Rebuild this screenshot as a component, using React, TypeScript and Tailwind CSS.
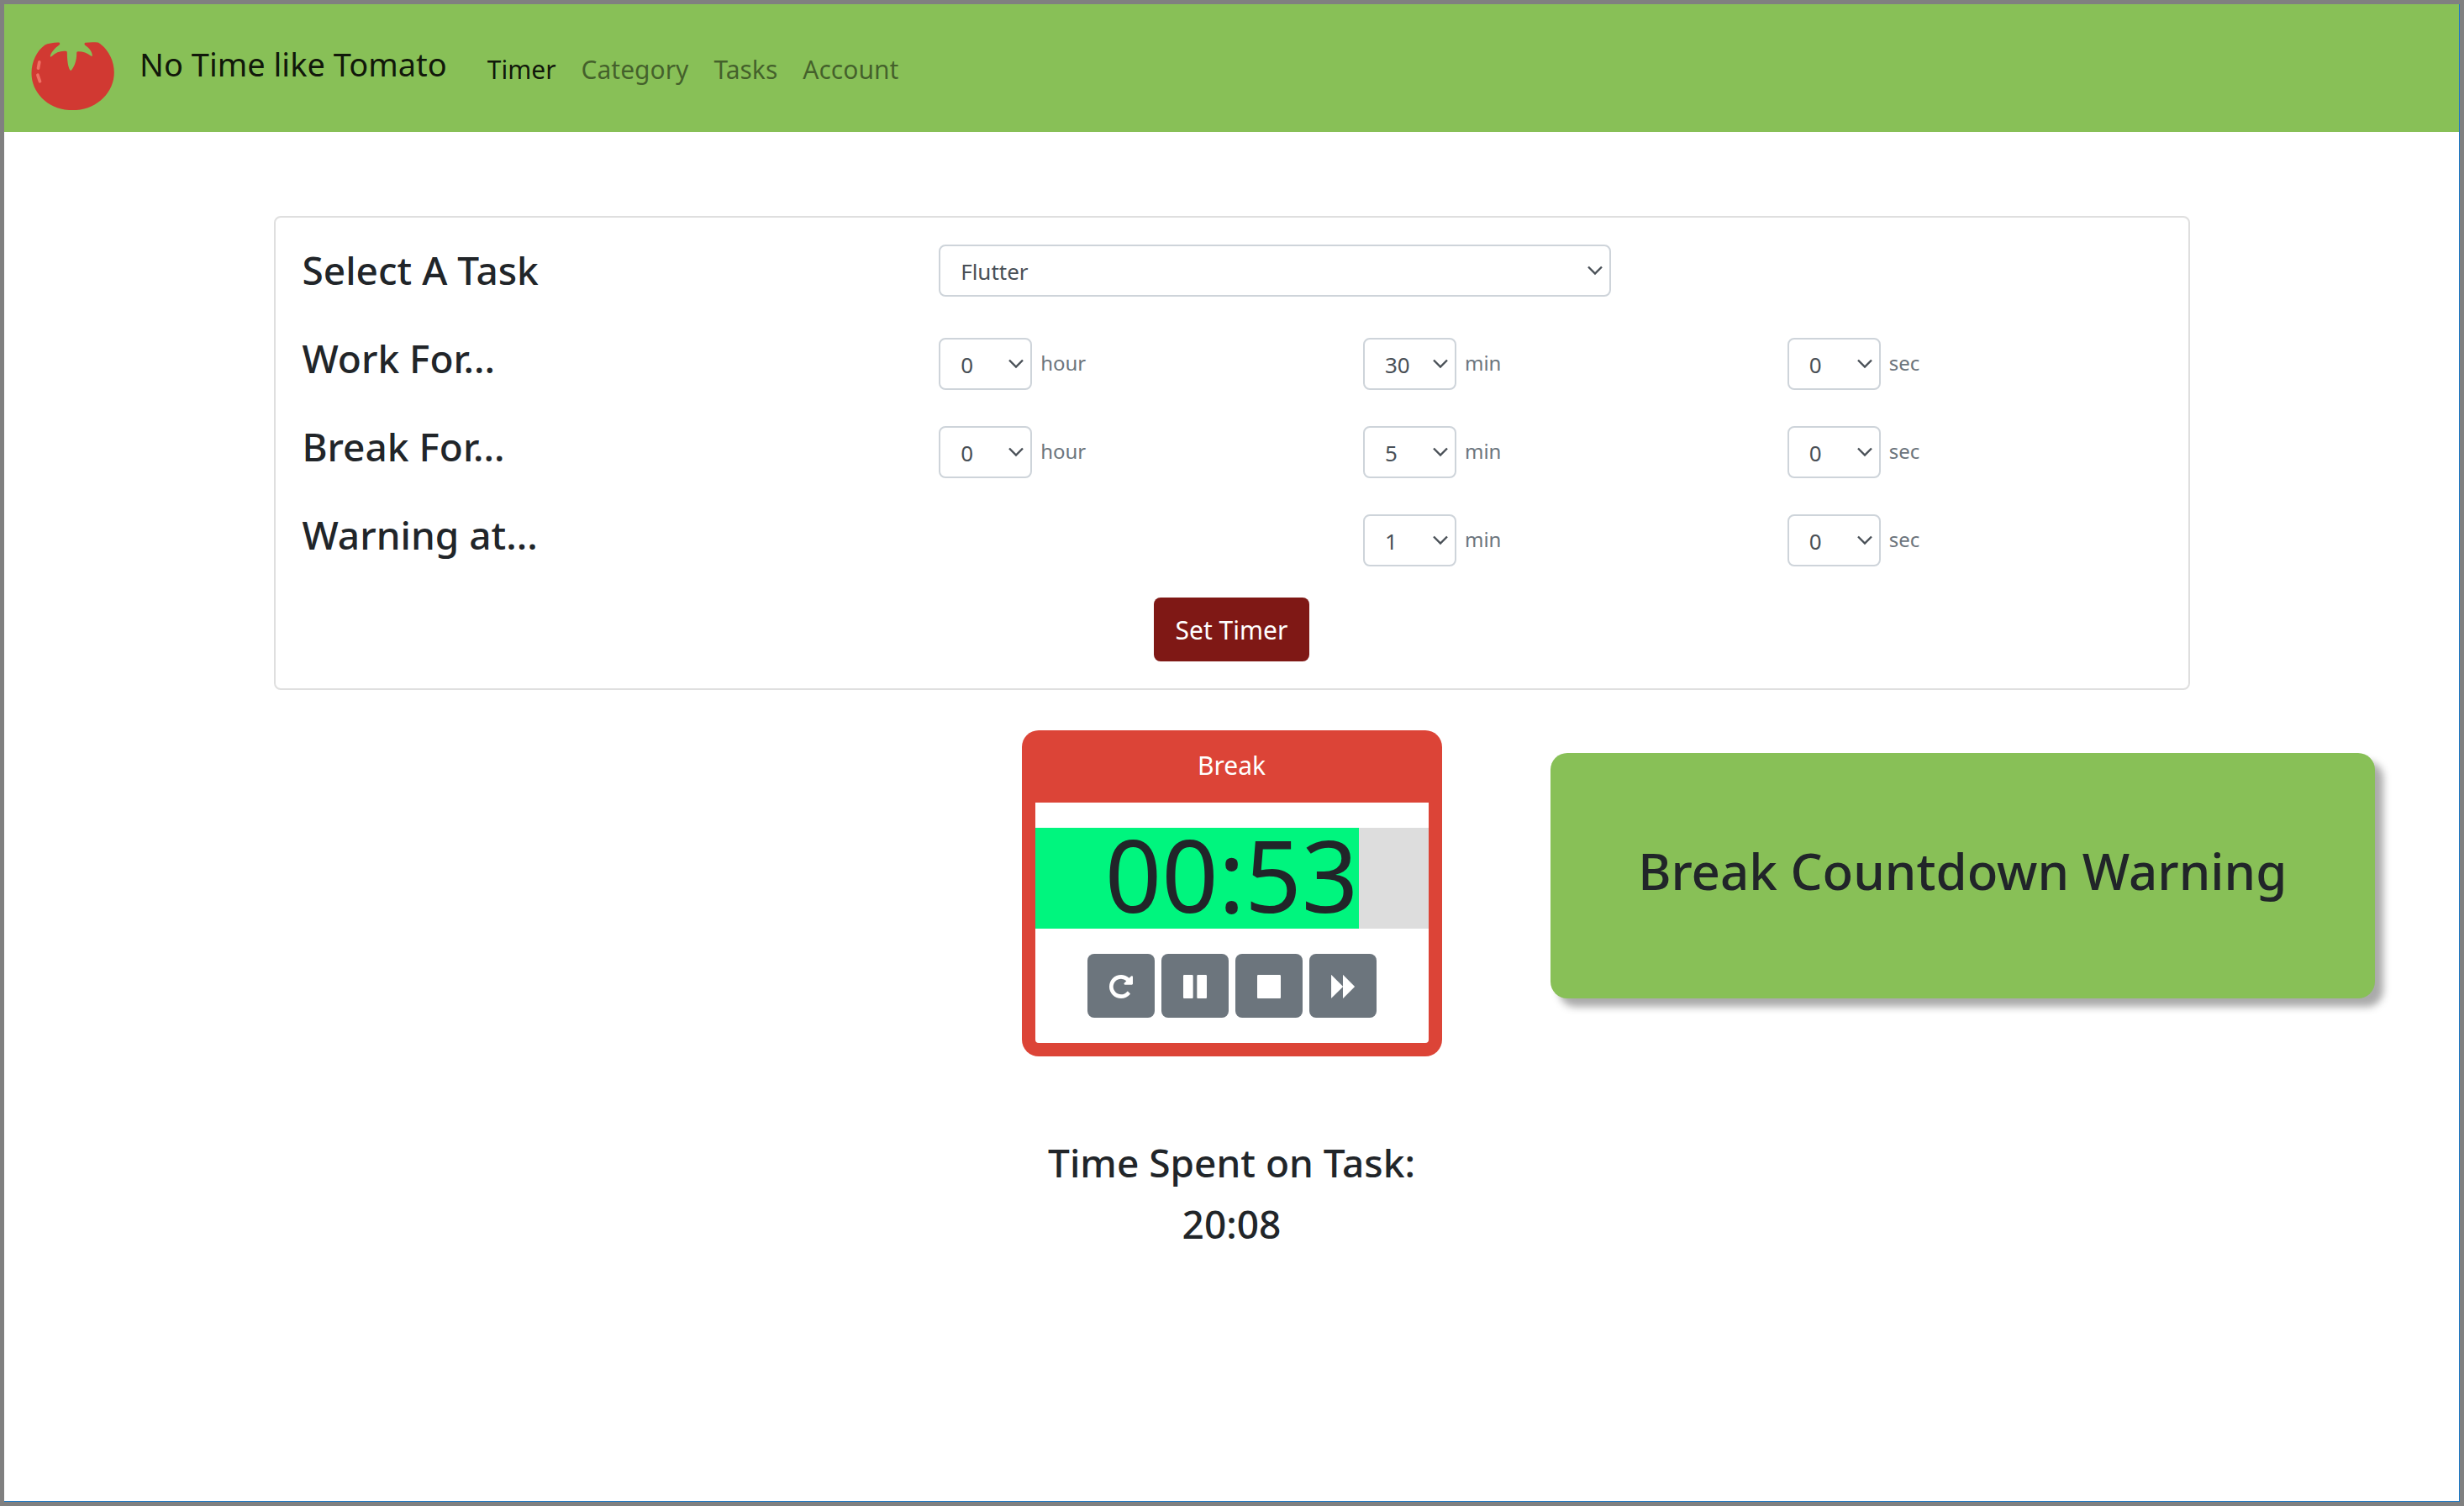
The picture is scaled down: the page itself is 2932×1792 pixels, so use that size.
import type { ReactNode } from "react";

const navLinks = ["Timer", "Category", "Tasks", "Account"];

function TomatoLogo() {
  return (
    <svg viewBox="52.5 4.5 297 297" className="size-[99px] shrink-0" aria-hidden="true">
      <path
        fill="#d13932"
        d="M150 60C156 60 157 66 152 70C140 78 124 95 121 108C121 113 124 112 127 109C140 96 158 89 176 91C180 91 181 93 181 97C181 120 184 148 191 158Q194 162 197 158C208 145 216 120 215 97Q215 92 220 92C238 92 253 97 266 108Q271 111 271 106C269 90 259 79 245 70C241 66 243 61 248 61C262 59 275 59 290 60C294 61 298 64 304 69C330 90 349 127 349 167C349 240 285 302 201 302C115 302 54 240 54 170C54 130 72 90 102 69C112 64 130 61 150 60Z"
      />
      <path d="M82 130L78 152M76 176L84 199" stroke="#ef7064" strokeWidth="11" strokeLinecap="round" fill="none" />
    </svg>
  );
}

function SelectBox({ id, value, options }: { id: string; value: string; options: string[] }) {
  return (
    <span className="relative block w-full">
      <select
        id={id}
        defaultValue={value}
        className="block h-[62px] w-full appearance-none rounded-lg border-2 border-[#ced4da] bg-white pt-0.5 pl-6 text-[26px] text-[#495057]"
      >
        {options.map((o) => (
          <option key={o}>{o}</option>
        ))}
      </select>
      <svg
        viewBox="0 0 18 12"
        className="pointer-events-none absolute top-[25px] right-2.5 h-3 w-[18px]"
        fill="none"
        stroke="#495057"
        strokeWidth="2.4"
        aria-hidden="true"
      >
        <path d="M1 1.5L9 9.5L17 1.5" />
      </svg>
    </span>
  );
}

function UnitField({ name, unit, value }: { name: string; unit: string; value: string }) {
  const id = `${name}-${unit}`;
  const options = Array.from({ length: unit === "hour" ? 24 : 60 }, (_, i) => String(i));
  return (
    <div className="flex items-center gap-2.5 pt-1.5">
      <div className="w-[111px]">
        <SelectBox id={id} value={value} options={options} />
      </div>
      <label htmlFor={id} className="pb-0.5 text-2xl leading-9 text-[#6c757d]">
        {unit}
      </label>
    </div>
  );
}

function Row({ title, children }: { title: ReactNode; children: ReactNode }) {
  return (
    <div className="grid min-h-[68px] grid-cols-[698fr_445fr_445fr_445fr] items-start gap-x-[60px]">
      <h2 className="text-[46px] leading-[60px] font-medium">{title}</h2>
      {children}
    </div>
  );
}

const controls = [
  {
    name: "Restart",
    path: "M1664 256v448q0 26-19 45t-45 19h-448q-42 0-59-40-17-39 14-69l138-138q-148-137-349-137-104 0-198.5 40.5t-163.5 109.5-109.5 163.5-40.5 198.5 40.5 198.5 109.5 163.5 163.5 109.5 198.5 40.5q119 0 225-52t179-147q7-10 23-12 15 0 25 9l137 138q9 8 9.5 20.5t-7.5 22.5q-109 132-264 204.5t-327 72.5q-156 0-298-61t-245-164-164-245-61-298 61-298 164-245 245-164 298-61q147 0 284.5 55.5t244.5 156.5l130-129q29-31 70-14 39 17 39 59z",
  },
  {
    name: "Pause",
    path: "M1664 192v1408q0 26-19 45t-45 19h-512q-26 0-45-19t-19-45v-1408q0-26 19-45t45-19h512q26 0 45 19t19 45zm-896 0v1408q0 26-19 45t-45 19h-512q-26 0-45-19t-19-45v-1408q0-26 19-45t45-19h512q26 0 45 19t19 45z",
  },
  {
    name: "Stop",
    path: "M1664 192v1408q0 26-19 45t-45 19h-1408q-26 0-45-19t-19-45v-1408q0-26 19-45t45-19h1408q26 0 45 19t19 45z",
  },
  {
    name: "Skip",
    path: "M141 1651q-10 10-10 0v-1518q0-10 10 0l741 741q9 9 13 19v-760q0-10 10 0l740 740q19 19 19 23t-19 23l-740 740q-10 10-10 0v-760q-4 10-13 19z",
  },
];

function TimerCard() {
  return (
    <section className="w-[500px] rounded-[20px] bg-[#dc4437] px-4 pb-4">
      <h2 className="flex h-[86px] items-center justify-center pb-0.5 text-3xl text-white">Break</h2>
      <div className="rounded-b bg-white py-[30px]">
        <div className="h-[120px] bg-[linear-gradient(to_right,#00f57e_82.3%,#dddddd_82.3%)] text-center text-[118px] leading-[112px]">
          00:53
        </div>
        <div className="mt-[30px] flex justify-center gap-2">
          {controls.map((c) => (
            <button
              key={c.name}
              type="button"
              aria-label={c.name}
              className="flex h-[76px] w-20 items-center justify-center rounded-lg bg-[#6c757d] pt-0.5"
            >
              <svg viewBox="128 128 1536 1536" className="size-7" fill="#ffffff" aria-hidden="true">
                <path d={c.path} />
              </svg>
            </button>
          ))}
        </div>
      </div>
    </section>
  );
}

export default function App() {
  return (
    <div className="flex min-h-screen flex-col border-[5px] border-[#808080] font-['Noto_Sans',sans-serif] text-[#212529]">
      <div className="flex-1 border-r border-b border-[#1979ca] bg-white">
        <nav className="flex h-[152px] items-center bg-[#88c057] px-8">
          <TomatoLogo />
          <a href="#" className="ml-[30px] pb-2.5 text-[38px] text-black/90">
            No Time like Tomato
          </a>
          <div className="ml-12 flex gap-[30px] pt-1 text-3xl">
            {navLinks.map((l, i) => (
              <a key={l} href="#" className={i === 0 ? "text-black/90" : "text-black/50"}>
                {l}
              </a>
            ))}
          </div>
        </nav>

        <main>
          <form className="mx-auto mt-[100px] flex w-full max-w-[2280px] flex-col gap-[37px] rounded-lg border-2 border-[#dfdfdf] p-8">
            <Row title={<label htmlFor="task">Select A Task</label>}>
              <div className="col-span-3 w-[55%]">
                <SelectBox id="task" value="Flutter" options={["Flutter"]} />
              </div>
            </Row>
            <Row title="Work For...">
              <UnitField name="work" unit="hour" value="0" />
              <UnitField name="work" unit="min" value="30" />
              <UnitField name="work" unit="sec" value="0" />
            </Row>
            <Row title="Break For...">
              <UnitField name="break" unit="hour" value="0" />
              <UnitField name="break" unit="min" value="5" />
              <UnitField name="break" unit="sec" value="0" />
            </Row>
            <Row title="Warning at...">
              <span />
              <UnitField name="warning" unit="min" value="1" />
              <UnitField name="warning" unit="sec" value="0" />
            </Row>
            <button type="button" className="h-[76px] self-center rounded-lg bg-[#7f1815] px-[26px] pt-0.5 text-3xl text-white">
              Set Timer
            </button>
          </form>

          <div className="mt-12 grid grid-cols-[1fr_auto_1fr] items-start">
            <span />
            <TimerCard />
            <aside className="mt-[27px] mr-[100px] ml-[129px] flex h-[292px] items-center justify-center rounded-[20px] bg-[#88c057] shadow-[10px_10px_10px_#aaaaaa]">
              <h2 className="pb-3 text-[60px] leading-[76px] font-medium">Break Countdown Warning</h2>
            </aside>
          </div>

          <div className="mt-[90px] text-center text-[46px] leading-[73px] font-medium">
            <h2>Time Spent on Task:</h2>
            <p>20:08</p>
          </div>
        </main>
      </div>
    </div>
  );
}
